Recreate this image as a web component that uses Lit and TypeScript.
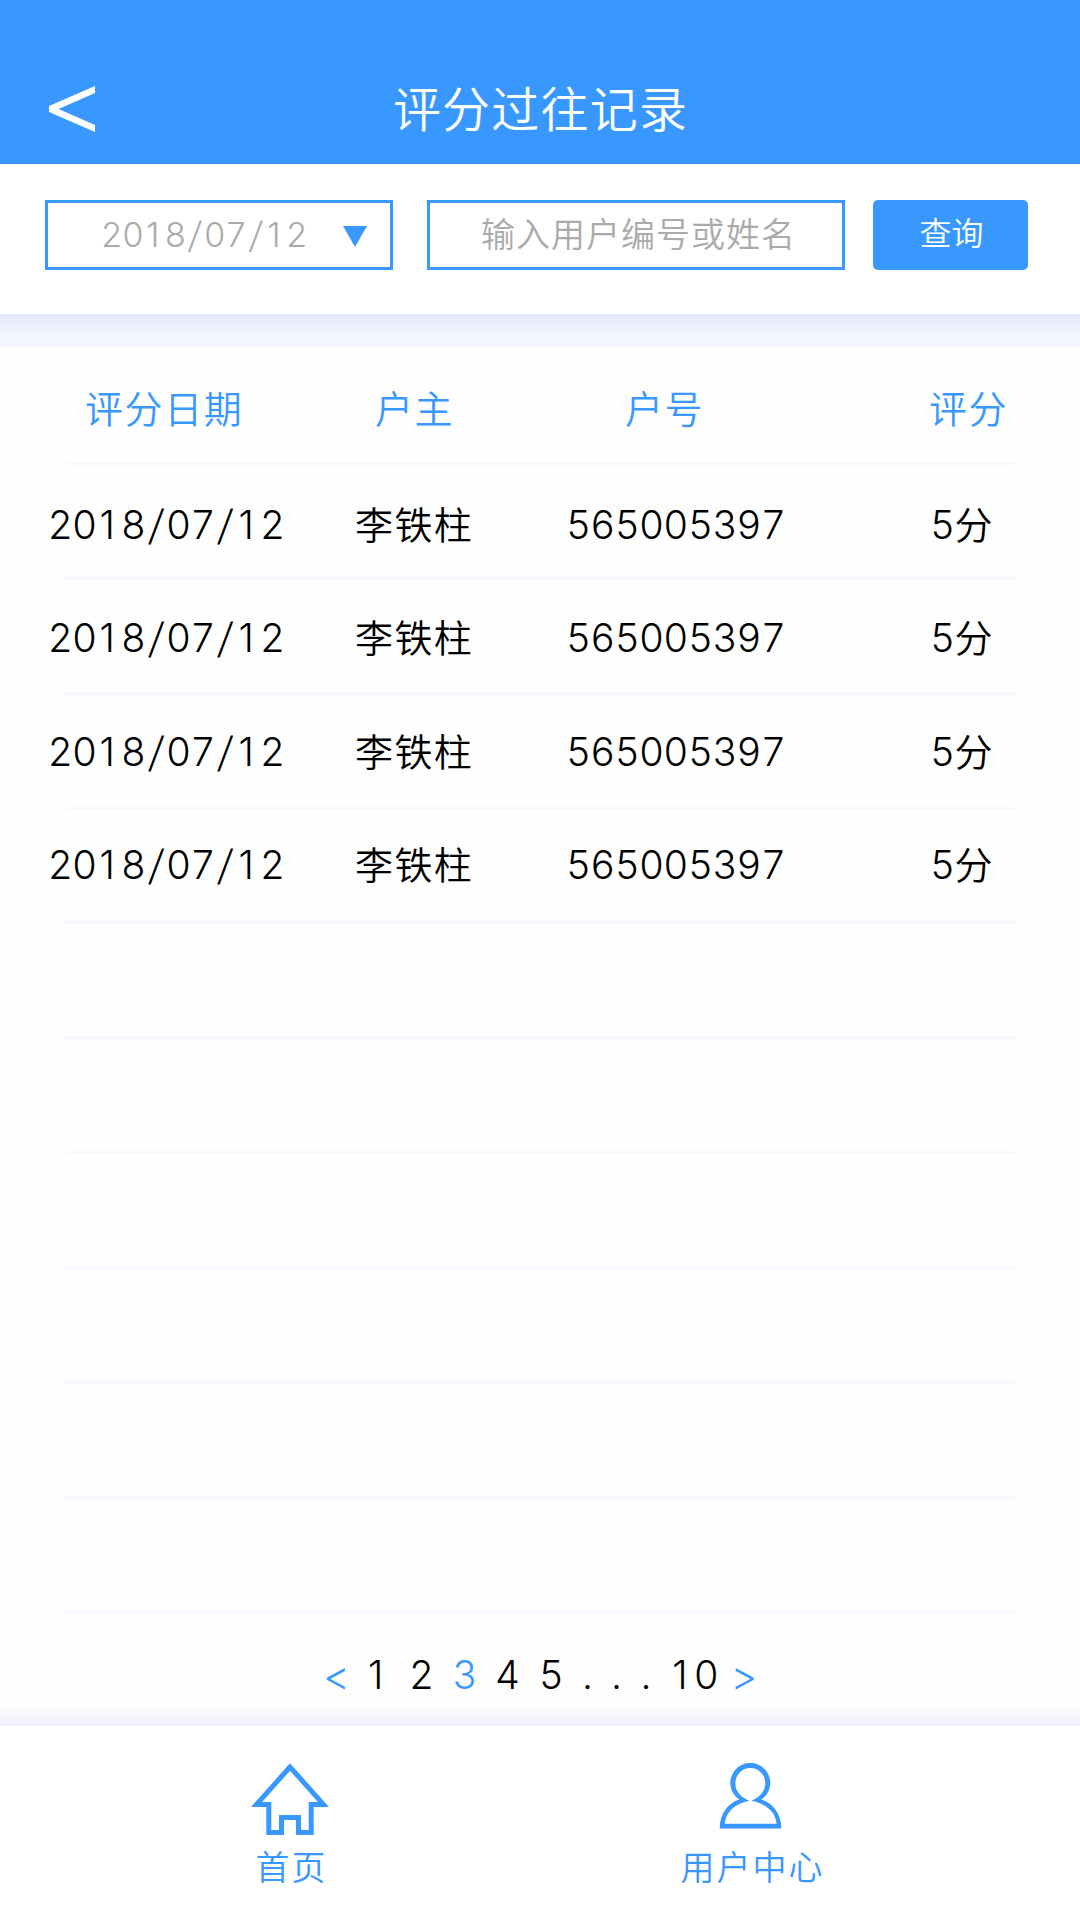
import { LitElement, html, css } from "lit";
import { customElement, state } from "lit/decorators.js";

interface ScoreRecord {
  date: string;
  owner: string;
  account: string;
  score: string;
}

@customElement("app-root")
export class AppRoot extends LitElement {
  static styles = css`
    :host {
      display: flex;
      flex-direction: column;
      width: 1080px;
      height: 1920px;
      overflow: hidden;
      background: #fefefe;
      color: #000;
      font-family: Inter, "Noto Sans CJK SC", sans-serif;
      font-weight: 350;
    }
    * {
      box-sizing: border-box;
    }
    button {
      font: inherit;
      border: 0;
      padding: 0;
      background: none;
      color: inherit;
    }
    .bar {
      flex: none;
      height: 164px;
      padding: 76px 49px 0;
      display: grid;
      grid-template-columns: 46px 1fr 46px;
      background: #3898ff;
      color: #fff;
    }
    .back {
      display: block;
      width: 46px;
      height: 46px;
      margin-top: 10px;
    }
    .title {
      margin: 0;
      padding: 2px 0 0 1px;
      text-align: center;
      font-size: 48px;
      line-height: 64px;
      font-weight: 350;
      letter-spacing: 1.2px;
    }
    .filters {
      flex: none;
      height: 150px;
      padding: 36px 52px 0 45px;
      display: flex;
      align-items: flex-start;
      background: #fff;
    }
    .field {
      height: 70px;
      border: 3px solid #3898ff;
      display: flex;
      align-items: center;
      color: #aaa;
      font-size: 34px;
      line-height: 64px;
      white-space: nowrap;
    }
    .date {
      width: 348px;
      padding: 0 23px 1px 53px;
      justify-content: space-between;
    }
    .digit,
    .slash {
      display: inline-block;
      width: 0.626em;
      text-align: center;
      letter-spacing: 0;
    }
    .digit.one {
      padding-right: 0.09em;
    }
    .slash {
      width: 0.53em;
      transform: skewX(-7deg) scaleY(1.06);
    }
    .caret {
      width: 24px;
      height: 21px;
      margin-top: 3px;
    }
    .keyword {
      width: 418px;
      margin-left: 34px;
      padding: 0 0 0 5px;
      justify-content: center;
      letter-spacing: 1px;
    }
    .query {
      width: 155px;
      height: 70px;
      margin-left: 28px;
      border-radius: 5px;
      background: #3898ff;
      color: #fff;
      font-size: 32px;
      line-height: 68px;
      padding: 0 0 2px 2px;
    }
    .gap {
      flex: none;
      height: 32px;
      background: linear-gradient(#e1e5fd, #edf0fe 40%, #f3f6ff 70%, #f3f6ff 90%, #f1f1fd);
    }
    .sheet {
      flex: none;
      height: 1380px;
      display: grid;
      grid-template-rows: 1270px 1fr;
    }
    .rules,
    .records {
      grid-area: 1 / 1;
    }
    .rules {
      margin: 4px 65px 0 66px;
      display: flex;
      flex-direction: column;
    }
    .rule {
      flex: none;
      height: 114.9px;
      border-bottom: 3px solid #f6f7ff;
    }
    .records {
      display: flex;
      flex-direction: column;
      font-size: 38px;
    }
    .row {
      height: 113.3px;
      display: grid;
      grid-template-columns: 307px 211px 364px 1fr;
      align-items: center;
      padding-left: 48px;
      letter-spacing: 1.4px;
      white-space: nowrap;
    }
    .cell {
      padding-bottom: 4px;
    }
    .row.head {
      height: 122px;
      color: #3898ff;
      grid-template-columns: 290px 250px 304px 1fr;
      padding-left: 85px;
    }
    .row.head .cell {
      padding-bottom: 2px;
      letter-spacing: 1.6px;
    }
    .num {
      font-size: 39px;
    }
    .cell .digit {
      font-size: 39px;
    }
    .pager {
      display: flex;
      padding: 36px 0 0 323px;
      font-size: 39px;
      line-height: 46px;
      background: linear-gradient(transparent 90px, #eef0fc 110px);
    }
    .page {
      flex: none;
      display: flex;
      justify-content: center;
    }
    .page:nth-child(2) {
      padding-left: 5px;
    }
    .on,
    .step {
      color: #3898ff;
    }
    .step {
      font-size: 41px;
      font-weight: 300;
      padding-top: 1px;
    }
    .tabs {
      flex: 1;
      display: flex;
      background: #fff;
      color: #3898ff;
      font-size: 34px;
    }
    .tab {
      display: flex;
      flex-direction: column;
      align-items: center;
      padding-top: 37px;
      width: 200px;
      white-space: nowrap;
      letter-spacing: 2px;
      line-height: 50px;
    }
    .tab span {
      padding-left: 3px;
    }
    .home {
      margin-left: 190px;
    }
    .user {
      margin-left: 261px;
    }
    .glyph {
      display: block;
      width: 78px;
      height: 72px;
      margin-bottom: 8px;
    }
  `;

  @state() private records: ScoreRecord[] = Array.from({ length: 4 }, () => ({
    date: "2018/07/12",
    owner: "李铁柱",
    account: "565005397",
    score: "5分",
  }));

  @state() private page = "3";

  private pages = [
    { label: "<", w: 27 },
    { label: "1", w: 50 },
    { label: "2", w: 43 },
    { label: "3", w: 43 },
    { label: "4", w: 43 },
    { label: "5", w: 44 },
    { label: ".", w: 29 },
    { label: ".", w: 29 },
    { label: ".", w: 30 },
    { label: "10", w: 66 },
    { label: ">", w: 34 },
  ];

  // Gives every digit the same advance while keeping the plain "1" shape.
  private figures(text: string) {
    return [...text].map((ch) =>
      /\d/.test(ch)
        ? html`<span class="digit ${ch === "1" ? "one" : ""}">${ch}</span>`
        : ch === "/"
          ? html`<span class="slash">/</span>`
          : ch
    );
  }

  render() {
    return html`
      <header class="bar">
        <svg class="back" viewBox="0 0 46 46">
          <path fill="#fff" d="M46 0V7L9.5 23L46 39V46L0 26V20Z" />
        </svg>
        <h1 class="title">评分过往记录</h1>
      </header>
      <section class="filters">
        <div class="field date">
          <div>${this.figures("2018/07/12")}</div>
          <svg class="caret" viewBox="0 0 24 21"><path fill="#3898ff" d="M0 0H24L12 21Z" /></svg>
        </div>
        <div class="field keyword">输入用户编号或姓名</div>
        <button class="query">查询</button>
      </section>
      <div class="gap"></div>
      <main class="sheet">
        <div class="rules">${Array.from({ length: 11 }, () => html`<div class="rule"></div>`)}</div>
        <div class="records">
          <div class="row head">
            ${["评分日期", "户主", "户号", "评分"].map((t) => html`<div class="cell">${t}</div>`)}
          </div>
          ${this.records.map(
            (r) => html`<div class="row">
              <div class="num">${this.figures(r.date)}</div>
              <div class="cell">${r.owner}</div>
              <div class="num">${this.figures(r.account)}</div>
              <div class="cell">${this.figures(r.score)}</div>
            </div>`
          )}
        </div>
        <nav class="pager">
          ${this.pages.map(
            (p) => html`<div
              class="page ${p.label === this.page ? "on" : ""} ${/[<>]/.test(p.label) ? "step" : ""}"
              style="width:${p.w}px"
            >${this.figures(p.label)}</div>`
          )}
        </nav>
      </main>
      <nav class="tabs">
        <div class="tab home">
          <svg class="glyph" viewBox="0 0 78 72" fill="none" stroke="#3898ff" stroke-width="5">
            <path d="M39 4L5.5 41.5H17.8V69.5H30.5V54.5H47.5V69.5H60.2V41.5H72.5Z" />
          </svg>
          <span>首页</span>
        </div>
        <div class="tab user">
          <svg class="glyph" viewBox="0 0 78 72" fill="#3898ff" fill-rule="evenodd">
            <path
              d="M27.3 36.6A20 20 0 1 1 49.3 36.6C61 40 69.3 51 69.3 65.5H7.7C7.7 51 16 40 27.3 36.6ZM37.3 37.7C29 34.5 23.3 28.5 23.3 20A15 15 0 0 1 53.3 20C53.3 28.5 47.6 34.5 39.3 37.7C53 40.5 63.4 48 64.6 60.7H12.7C13.9 48 23.6 40.5 37.3 37.7Z"
            />
          </svg>
          <span>用户中心</span>
        </div>
      </nav>
    `;
  }
}
